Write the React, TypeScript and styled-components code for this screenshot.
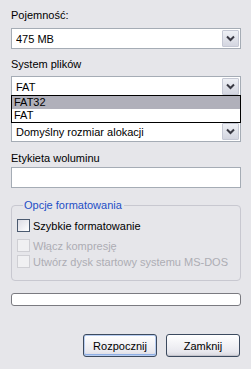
import React from "react";
import styled, { createGlobalStyle } from "styled-components";

const Global = createGlobalStyle`
  html, body { margin: 0; padding: 0; background: #e6e6ea; }
  body { font-family: Tahoma, "Liberation Sans", Arial, sans-serif; font-size: 11px; color: #000; }
`;

const Page = styled.div`
  width: 251px;
  height: 369px;
  box-sizing: border-box;
  padding: 8px 10px 0 11px;
  display: flex;
  flex-direction: column;
  background: #e6e6ea;
`;

const Label = styled.div<{ $mt?: number }>`
  height: 13px;
  line-height: 13px;
  margin-top: ${(p) => p.$mt ?? 0}px;
  white-space: nowrap;
`;

const Spacer = styled.div<{ $h: number }>`
  height: ${(p) => p.$h}px;
  flex: none;
`;

const ComboWrap = styled.div<{ $mt?: number }>`
  position: relative;
  margin-top: ${(p) => p.$mt ?? 0}px;
`;

const ComboBox = styled.div`
  height: 21px;
  box-sizing: border-box;
  border: 1px solid #a5acb5;
  background: #fff;
  display: flex;
  align-items: center;
  padding: 0 1px 0 4px;
`;

const ComboText = styled.span`
  flex: 1;
  white-space: nowrap;
  overflow: hidden;
`;

const ArrowBtn = styled.div`
  width: 17px;
  height: 17px;
  box-sizing: border-box;
  border: 1px solid #c5c8d4;
  border-radius: 1px;
  background: linear-gradient(#eef0f5, #d4d6e0);
  display: flex;
  align-items: center;
  justify-content: center;
`;

const DropList = styled.div`
  position: absolute;
  left: 0;
  right: 0;
  top: 19px;
  z-index: 5;
  background: #fff;
  border: 1px solid #000;
  display: flex;
  flex-direction: column;
`;

const DropItem = styled.div<{ $sel?: boolean }>`
  height: 13px;
  line-height: 13px;
  padding-left: 2px;
  background: ${(p) => (p.$sel ? "#b0b0ba" : "#fff")};
`;

const TextField = styled.div`
  height: 21px;
  box-sizing: border-box;
  border: 1px solid #a5acb5;
  background: #fff;
  margin-top: 2px;
`;

const Group = styled.fieldset`
  margin: 11px 0 0 0;
  padding: 4px 6px 12px 5px;
  border: 1px solid #c8c8d0;
  border-radius: 4px;
  display: flex;
  flex-direction: column;
  min-width: 0;
`;

const Legend = styled.legend`
  color: #1e4fc6;
  padding: 0 2px 0 1px;
  margin-left: 6px;
  line-height: 13px;
`;

const CheckRow = styled.div<{ $mt?: number }>`
  display: flex;
  align-items: center;
  height: 13px;
  margin-top: ${(p) => p.$mt ?? 0}px;
  gap: 3px;
  white-space: nowrap;
`;

const Box = styled.div<{ $disabled?: boolean }>`
  width: 13px;
  height: 13px;
  box-sizing: border-box;
  flex: none;
  border: 1px solid ${(p) => (p.$disabled ? "#cfcfd4" : "#4b5a70")};
  background: ${(p) =>
    p.$disabled ? "#f0f0f2" : "linear-gradient(135deg, #dcdce4, #ffffff)"};
`;

const CheckText = styled.span<{ $disabled?: boolean }>`
  color: ${(p) => (p.$disabled ? "#adadb4" : "#000")};
`;

const Progress = styled.div`
  height: 13px;
  box-sizing: border-box;
  margin-top: 12px;
  border: 1px solid #7a7a80;
  border-radius: 3px;
  background: #fff;
`;

const ButtonRow = styled.div`
  display: flex;
  justify-content: flex-end;
  gap: 9px;
  margin-top: 28px;
  padding-right: 1px;
`;

const Button = styled.button<{ $default?: boolean }>`
  width: 74px;
  height: 23px;
  box-sizing: border-box;
  font: inherit;
  color: #000;
  border: 1px solid #3c4a5e;
  border-radius: 3px;
  background: linear-gradient(#ffffff, #e8e8ee 80%, #d6d6de);
  box-shadow: ${(p) =>
    p.$default
      ? "inset 0 0 0 1px #b8cdf0, inset 0 -1px 0 1px #8eaee4"
      : "inset 0 -1px 0 0 #c4c4cc"};
  padding: 0;
`;

const Chevron = () => (
  <svg width="9" height="7" viewBox="0 0 9 7">
    <path d="M1 1.5 L4.5 5 L8 1.5" fill="none" stroke="#3a3a44" strokeWidth="2" />
  </svg>
);

const Combo = ({ text }: { text: string }) => (
  <ComboBox>
    <ComboText>{text}</ComboText>
    <ArrowBtn>
      <Chevron />
    </ArrowBtn>
  </ComboBox>
);

export default function App() {
  return (
    <>
      <Global />
      <Page>
        <Label $mt={1}>Pojemność:</Label>
        <ComboWrap $mt={6}>
          <Combo text="475 MB" />
        </ComboWrap>
        <Label $mt={9}>System plików</Label>
        <ComboWrap $mt={5}>
          <Combo text="FAT" />
          <DropList>
            <DropItem $sel>FAT32</DropItem>
            <DropItem>FAT</DropItem>
          </DropList>
        </ComboWrap>
        <Spacer $h={24} />
        <ComboWrap>
          <Combo text="Domyślny rozmiar alokacji" />
        </ComboWrap>
        <Label $mt={10}>Etykieta woluminu</Label>
        <TextField />
        <Group>
          <Legend>Opcje formatowania</Legend>
          <CheckRow $mt={3}>
            <Box />
            <CheckText>Szybkie formatowanie</CheckText>
          </CheckRow>
          <CheckRow $mt={7}>
            <Box $disabled />
            <CheckText $disabled>Włącz kompresję</CheckText>
          </CheckRow>
          <CheckRow $mt={3}>
            <Box $disabled />
            <CheckText $disabled>Utwórz dysk startowy systemu MS-DOS</CheckText>
          </CheckRow>
        </Group>
        <Progress />
        <ButtonRow>
          <Button $default>Rozpocznij</Button>
          <Button>Zamknij</Button>
        </ButtonRow>
      </Page>
    </>
  );
}
